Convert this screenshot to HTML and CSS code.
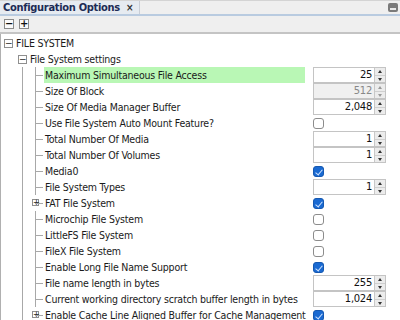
FILE: index.html
```html
<!DOCTYPE html>
<html>
<head>
<meta charset="utf-8">
<link rel="stylesheet" href="styles.css">
</head>
<body>
<div class="panel">
  <div class="tabbar">
    <div class="tab"><span class="tab-title">Configuration Options</span><span class="tab-close">×</span></div>
    <div class="tab-fill"></div>
    <div class="maxbtn"><span></span></div>
  </div>
  <div class="toolbar">
    <span class="tbtn">−</span>
    <span class="tbtn">+</span>
  </div>
  <div class="tree">
    <div class="row l1"><span class="exp">−</span><span class="label">FILE SYSTEM</span></div>
    <div class="row l2"><span class="g g0"></span><span class="exp">−</span><span class="label">File System settings</span></div>

    <div class="row l3 first"><span class="g g0"></span><span class="g g1"></span><span class="g g2"></span><span class="label hl">Maximum Simultaneous File Access</span><span class="ctl"><span class="spin"><span class="val">25</span><span class="btns"><i class="up"></i><i class="dn"></i></span></span></span></div>
    <div class="row l3"><span class="g g0"></span><span class="g g1"></span><span class="g g2"></span><span class="label">Size Of Block</span><span class="ctl"><span class="spin dis"><span class="val">512</span><span class="btns"><i class="up"></i><i class="dn"></i></span></span></span></div>
    <div class="row l3"><span class="g g0"></span><span class="g g1"></span><span class="g g2"></span><span class="label">Size Of Media Manager Buffer</span><span class="ctl"><span class="spin"><span class="val">2,048</span><span class="btns"><i class="up"></i><i class="dn"></i></span></span></span></div>
    <div class="row l3"><span class="g g0"></span><span class="g g1"></span><span class="g g2"></span><span class="label">Use File System Auto Mount Feature?</span><span class="ctl"><span class="cb"></span></span></div>
    <div class="row l3"><span class="g g0"></span><span class="g g1"></span><span class="g g2"></span><span class="label">Total Number Of Media</span><span class="ctl"><span class="spin"><span class="val">1</span><span class="btns"><i class="up"></i><i class="dn"></i></span></span></span></div>
    <div class="row l3"><span class="g g0"></span><span class="g g1"></span><span class="g g2"></span><span class="label">Total Number Of Volumes</span><span class="ctl"><span class="spin"><span class="val">1</span><span class="btns"><i class="up"></i><i class="dn"></i></span></span></span></div>
    <div class="row l3"><span class="g g0"></span><span class="g g1"></span><span class="g g2"></span><span class="label">Media0</span><span class="ctl"><span class="cb on"></span></span></div>
    <div class="row l3"><span class="g g0"></span><span class="g g1"></span><span class="g g2"></span><span class="label">File System Types</span><span class="ctl"><span class="spin"><span class="val">1</span><span class="btns"><i class="up"></i><i class="dn"></i></span></span></span></div>
    <div class="row l3"><span class="g g0"></span><span class="g g1 gx"><span class="exp small">+</span></span><span class="g g2 gx2"></span><span class="label">FAT File System</span><span class="ctl"><span class="cb on"></span></span></div>
    <div class="row l3"><span class="g g0"></span><span class="g g1"></span><span class="g g2"></span><span class="label">Microchip File System</span><span class="ctl"><span class="cb"></span></span></div>
    <div class="row l3"><span class="g g0"></span><span class="g g1"></span><span class="g g2"></span><span class="label">LittleFS File System</span><span class="ctl"><span class="cb"></span></span></div>
    <div class="row l3"><span class="g g0"></span><span class="g g1"></span><span class="g g2"></span><span class="label">FileX File System</span><span class="ctl"><span class="cb"></span></span></div>
    <div class="row l3"><span class="g g0"></span><span class="g g1"></span><span class="g g2"></span><span class="label">Enable Long File Name Support</span><span class="ctl"><span class="cb on"></span></span></div>
    <div class="row l3"><span class="g g0"></span><span class="g g1"></span><span class="g g2"></span><span class="label">File name length in bytes</span><span class="ctl"><span class="spin"><span class="val">255</span><span class="btns"><i class="up"></i><i class="dn"></i></span></span></span></div>
    <div class="row l3"><span class="g g0"></span><span class="g g1"></span><span class="g g2"></span><span class="label">Current working directory scratch buffer length in bytes</span><span class="ctl"><span class="spin"><span class="val">1,024</span><span class="btns"><i class="up"></i><i class="dn"></i></span></span></span></div>
    <div class="row l3"><span class="g g0"></span><span class="g g1 gx"><span class="exp small">+</span></span><span class="g g2 gx2"></span><span class="label">Enable Cache Line Aligned Buffer for Cache Management</span><span class="ctl"><span class="cb on"></span></span></div>
  </div>
</div>
</body>
</html>
```
FILE: styles.css
```css
* { box-sizing: border-box; }
html, body { margin: 0; padding: 0; background: #fff; }
body { width: 400px; height: 320px; overflow: hidden; font-family: "DejaVu Sans Condensed", "DejaVu Sans", sans-serif; font-size: 10.5px; letter-spacing: -0.2px; color: #1a1a1a; }

.panel { display: flex; flex-direction: column; height: 320px; }

.tabbar { display: flex; height: 16px; flex: none; background: #efefef; border-top: 1px solid #d4d4d4; border-bottom: 2px solid #b9cbe0; align-items: stretch; }
.tab { display: flex; align-items: center; padding: 0 6px 0 3px; background: #e6ebf1; border-right: 1px solid #c9ced6; }
.tab-title { font-weight: bold; color: #1d2b55; font-size: 11px; letter-spacing: -0.3px; }
.tab-close { margin-left: 6px; font-size: 10px; color: #333; font-weight: bold; }
.tab-fill { flex: 1; }
.maxbtn { width: 10px; height: 9px; margin: 2px 2px 0 0; border-radius: 2px; background: #7a7a7a; display: flex; align-items: flex-end; justify-content: center; padding-bottom: 2px; }
.maxbtn span { width: 6px; height: 2px; background: #e8e8e8; }

.toolbar { display: flex; flex: none; gap: 5px; height: 18px; align-items: center; padding-left: 4px; background: #efefef; border-bottom: 2px solid #c4c4c4; }
.tbtn { width: 10px; height: 10px; border: 1px solid #8a8a8a; background: #fafafa; font-size: 10px; line-height: 8px; text-align: center; color: #111; font-weight: bold; font-family: "DejaVu Sans", sans-serif; letter-spacing: 0; }

.tree { flex: none; padding-top: 1px; border-left: 1px solid #b0b0b0; }
.row { display: flex; height: 16px; align-items: stretch; }
.label { display: flex; align-items: center; white-space: nowrap; }
.l1 { padding-left: 3px; }
.l1 .exp { margin-top: 4px; }
.l1 .label { padding-left: 3px; }
.l2 .exp { margin-top: 4px; margin-left: -4px; }
.l2 .label { padding-left: 3px; }

.exp { width: 9px; height: 9px; border: 1px solid #8f8f8f; background: #fff; font-size: 9px; line-height: 6px; text-align: center; color: #222; font-family: "DejaVu Sans", sans-serif; letter-spacing: 0; flex: none; }
.exp.small { width: 7px; height: 7px; font-size: 8px; line-height: 5px; position: absolute; left: -4px; top: 4px; }

.g { flex: none; height: 16px; position: relative; }
.g0 { width: 21px; }
.g1 { width: 13px; border-left: 1px solid #a8a8a8; }
.g2 { width: 9px; border-left: 1px solid #a8a8a8; }
.g2::after { content: ""; position: absolute; left: 0; right: 1px; top: 8px; border-top: 1px solid #a8a8a8; }
.gx2 { border-left: none; }
.gx2::after { left: 0; }
.g1.gx .exp.small { left: 9px; }

.l3 .label { width: 261px; padding-left: 1px; }
.label.hl { background: #b9f7b5; }

.ctl { margin-left: 8px; display: flex; align-items: center; }
.spin { width: 73px; height: 16px; display: flex; border: 1px solid #c4c4c4; background: #fff; }
.val { flex: 1; text-align: right; padding-right: 2px; line-height: 14px; font-size: 10px; color: #111; font-family: "DejaVu Sans", sans-serif; letter-spacing: -0.3px; }
.spin.dis { background: #f0f0f0; }
.spin.dis .val { color: #888; }
.btns { width: 11px; display: flex; flex-direction: column; border-left: 1px solid #c8c8c8; background: #ececec; }
.btns i { flex: 1; position: relative; }
.btns i.up { border-bottom: 1px solid #d0d0d0; }
.btns i.up::after { content: ""; position: absolute; left: 3px; top: 2px; border-left: 2px solid transparent; border-right: 2px solid transparent; border-bottom: 3px solid #333; }
.btns i.dn::after { content: ""; position: absolute; left: 3px; top: 2px; border-left: 2px solid transparent; border-right: 2px solid transparent; border-top: 3px solid #333; }
.spin.dis .btns i.up::after { border-bottom-color: #999; }
.spin.dis .btns i.dn::after { border-top-color: #999; }

.cb { width: 11px; height: 11px; border: 1px solid #8c8c8c; border-radius: 3px; background: #fff; position: relative; }
.cb.on { background: #1a6ad2; border-color: #1558b0; }
.cb.on::after { content: ""; position: absolute; left: 3px; top: 1px; width: 3px; height: 6px; border-right: 1px solid #cfe3ff; border-bottom: 1px solid #cfe3ff; transform: rotate(40deg); }
```
